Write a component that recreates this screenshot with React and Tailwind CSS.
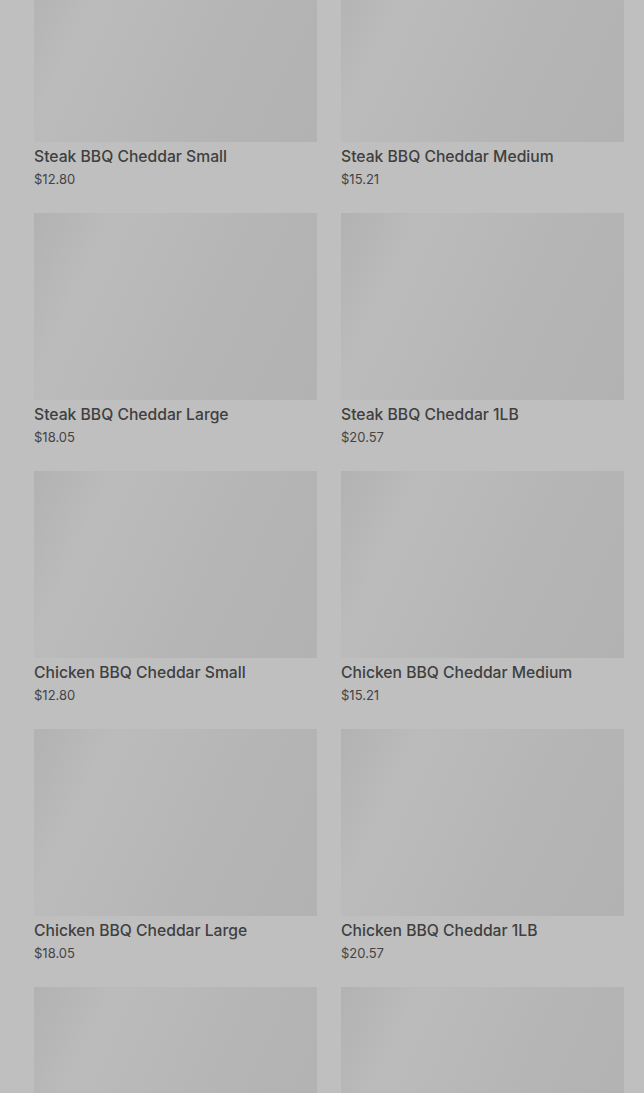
import React from "react";

const items = [
  ["Steak BBQ Cheddar Small", "$12.80"],
  ["Steak BBQ Cheddar Medium", "$15.21"],
  ["Steak BBQ Cheddar Large", "$18.05"],
  ["Steak BBQ Cheddar 1LB", "$20.57"],
  ["Chicken BBQ Cheddar Small", "$12.80"],
  ["Chicken BBQ Cheddar Medium", "$15.21"],
  ["Chicken BBQ Cheddar Large", "$18.05"],
  ["Chicken BBQ Cheddar 1LB", "$20.57"],
  ["", ""],
  ["", ""],
];

function Card({ title, price }) {
  return (
    <div className="flex flex-col">
      <div className="h-[187px] w-full bg-[linear-gradient(115deg,#b2b2b2_0%,#bbbbbb_22%,#b8b8b8_45%,#b4b4b4_70%,#b2b2b2_100%)]" />
      <div className="pt-[5px] text-[15.7px] leading-[20px] font-medium text-[#404040]">
        {title}
      </div>
      <div className="mt-[3px] text-[13px] leading-[18px] text-[#444444]">{price}</div>
    </div>
  );
}

export default function App() {
  return (
    <div
      className="w-[644px] h-[1093px] overflow-hidden bg-[#bfbfbf]"
      style={{ fontFamily: "Inter, 'Noto Sans', sans-serif" }}
    >
      <div className="mt-[-45px] pl-[34px] pr-[20px] grid grid-cols-2 gap-x-[24px] gap-y-[25px]">
        {items.map(([t, p], i) => (
          <Card key={i} title={t} price={p} />
        ))}
      </div>
    </div>
  );
}
